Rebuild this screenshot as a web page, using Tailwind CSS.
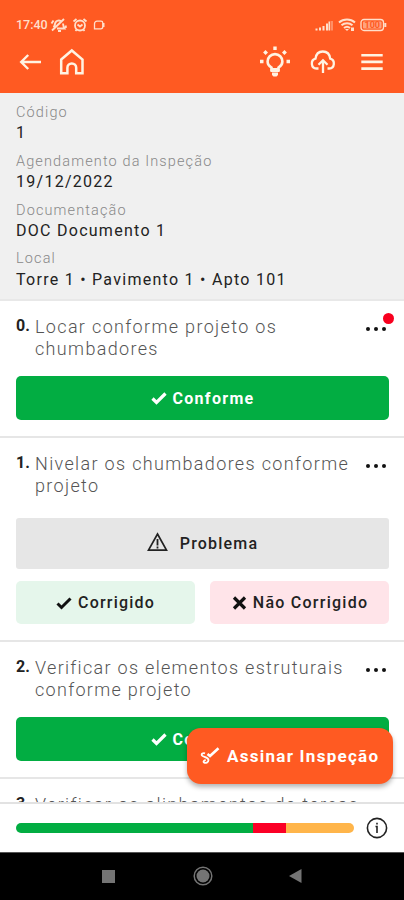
<!DOCTYPE html>
<html lang="pt-BR">

<head>
    <meta charset="UTF-8">
    <meta name="viewport" content="width=device-width, initial-scale=1.0">
    <script src="https://cdn.jsdelivr.net/npm/@tailwindcss/browser@4"></script>
    <title>Inspeção</title>
</head>

<body class="bg-white font-['Roboto',sans-serif] text-[#222]">
    <div class="relative flex flex-col w-[404px] h-[900px] overflow-hidden">
        <!-- Status bar + toolbar -->
        <header class="shrink-0 h-[93px] bg-[#ff5a22] text-[#ffdfcb]">
            <div class="flex items-center justify-between h-8 pt-[17px] pl-4 pr-[17px]">
                <div class="flex items-center">
                    <span class="text-[12.5px] leading-4 font-medium w-[34px]">17:40</span>
                    <svg class="w-[17px] h-4" viewBox="0 0 17 16" fill="none" stroke="currentColor" stroke-width="1.900">
                        <path d="M3.500 10.500C5 9 4.500 7.500 5.500 5.500 6.500 3.500 9 3 11 4M13 6.500c.2 2 .5 3.500 1.500 5H7M8 14h3M2 13.500 14 2M1.500 6.500l2-3M15.800 8.500v2.500" />
                    </svg>
                    <svg class="ml-[5px] w-4 h-4" viewBox="0 0 16 16" fill="none" stroke="currentColor" stroke-width="1.800">
                        <circle cx="8" cy="8.500" r="5" />
                        <path d="M1.500 4.500 4.500 2M14.500 4.500l-3-2.500M5.500 7.500 8 9.500l2.500-2M3.500 14l1.200-1.500M12.500 14l-1.200-1.500" />
                    </svg>
                    <svg class="ml-1 w-[14px] h-4" viewBox="0 0 14 16" fill="none" stroke="currentColor" stroke-width="1.300">
                        <path d="M9 4.200H5a2.500 2.500 0 0 0-2.500 2.500V11.800h6.300a2 2 0 0 0 2-2V6a1.800 1.800 0 0 0-1.800-1.800Z" />
                        <path fill="currentColor" stroke="none" d="M10.500 6h2v4h-2z" />
                    </svg>
                </div>
                <div class="flex items-center">
                    <svg class="w-[19px] h-4" viewBox="0 0 19 16" fill="currentColor">
                        <path d="M.5 11.500h2V13.500h-2zM4 10.500h2v3H4zM7.500 9h2v4.500h-2zM11 6.500h2v7h-2z" />
                        <path d="M13.500 4.500h1.500v9h-1.500z" />
                        <path opacity=".4" d="M15.500 4h2.500v9.500h-2.500z" />
                    </svg>
                    <svg class="ml-1 w-[18px] h-4" viewBox="0 0 18 16" fill="none" stroke="currentColor" stroke-width="2">
                        <path d="M1 5.500c4.500-4 11.500-4 16 0M3.500 8.300c3.200-2.900 7.800-2.900 11 0M6 11c2-1.700 4-1.700 6 0" />
                        <path fill="currentColor" stroke="none" d="m9 14-2-2h4zM13 10.500h3V14h-3z" />
                    </svg>
                    <svg class="ml-1 w-[27px] h-4" viewBox="0 0 27 16" fill="none" stroke="currentColor" stroke-width="1.300">
                        <rect x="1" y="2.500" width="22.500" height="11" rx="3" />
                        <rect x="3" y="4.500" width="18.500" height="7" rx="1" fill="currentColor" fill-opacity=".55" stroke="none" />
                        <path stroke-width="2" d="M25.300 6v4" />
                        <text x="12.300" y="11.200" text-anchor="middle" font-size="9" font-weight="700" fill="#ff5a22" stroke="none">100</text>
                    </svg>
                </div>
            </div>
            <div class="flex items-center h-[60px] pl-[19px] pr-5 text-[#fff3e2]">
                <svg class="w-6 h-6" viewBox="0 0 24 24" fill="none" stroke="currentColor" stroke-width="2.400">
                    <path d="M22 12H2.500M9.200 5l-7 7 7 7" />
                </svg>
                <svg class="ml-4 w-[26px] h-[28px]" viewBox="0 0 26 28" fill="none" stroke="currentColor" stroke-width="2.500">
                    <path d="M2.200 11.500 12.800 2.500l10.700 9V25.300h-6.300v-5.500a4.400 4.400 0 0 0-8.800 0v5.500H2.200z" />
                </svg>
                <svg class="ml-auto w-8 h-8" viewBox="0 0 32 32" fill="none" stroke="currentColor" stroke-width="2.600">
                    <path d="M12.500 24v-2.500c-2.500-1.500-3.900-3.200-3.900-6a7.400 7.400 0 0 1 14.800 0c0 2.800-1.400 4.500-3.900 6V24z" />
                    <path fill="currentColor" stroke="none" d="M11.500 22h9v4h-9zM13 26.500h6v2.500l-1.500 1.500h-3L13 29z" />
                    <path stroke-width="3.400" d="M16 .5v3.500M1 15.500h3.500M27.500 15.500H31M5.300 5.300l2.500 2.500M26.700 5.300l-2.500 2.500" />
                </svg>
                <svg class="ml-[19px] w-[26px] h-6" viewBox="0 0 26 24" fill="none" stroke="currentColor" stroke-width="2.300">
                    <path d="M8.500 18.500H6.500a5 5 0 0 1-1-9.800C6 4.500 8.500 1.500 12.800 1.500S19.700 4.500 20.200 8.700a5 5 0 0 1-1 9.800H17.500" />
                    <path d="M13 23V10.500M8.500 14.800 13 10.300l4.500 4.500" />
                </svg>
                <svg class="ml-6 w-[24px] h-5" viewBox="0 0 24 20" stroke="currentColor" stroke-width="2.600">
                    <path d="M1.300 3.200h21.400M1.300 9.900h21.400M1.300 16.600h21.400" />
                </svg>
            </div>
        </header>

        <!-- Dados da inspeção -->
        <section class="shrink-0 h-[208px] px-4 pt-[10px] bg-[#f0f0f0] border-b-2 border-[#e8e8e8]">
            <div class="h-[48.8px]">
                <p class="text-[14.5px] leading-5 tracking-[1.13px] font-light text-[#888]">Código</p>
                <p class="text-base leading-5 tracking-[1.27px]">1</p>
            </div>
            <div class="h-[48.8px]">
                <p class="text-[14.5px] leading-5 tracking-[1.13px] font-light text-[#888]">Agendamento da Inspeção</p>
                <p class="text-base leading-5 tracking-[1.27px]">19/12/2022</p>
            </div>
            <div class="h-[48.8px]">
                <p class="text-[14.5px] leading-5 tracking-[1.13px] font-light text-[#888]">Documentação</p>
                <p class="text-base leading-5 tracking-[1.27px]">DOC Documento 1</p>
            </div>
            <div class="h-[48.8px]">
                <p class="text-[14.5px] leading-5 tracking-[1.13px] font-light text-[#888]">Local</p>
                <p class="text-base leading-[21px] tracking-[1.27px]">Torre 1 • Pavimento 1 • Apto 101</p>
            </div>
        </section>

        <!-- Itens -->
        <main class="flex-1 min-h-0 overflow-hidden">
            <article class="pt-[15px] pb-4 pl-4 pr-[15px] border-b-2 border-[#e6e6e6]">
                <div class="flex items-start">
                    <span class="w-[19px] shrink-0 text-base leading-5 font-bold">0.</span>
                    <h2 class="flex-1 text-lg leading-[22px] tracking-[1.34px] font-light text-[#555]">Locar conforme projeto os<br>chumbadores</h2>
                    <div class="relative mt-[11px] mr-[3px] flex gap-1">
                        <i class="size-1 rounded-full bg-[#111]"></i>
                        <i class="size-1 rounded-full bg-[#111]"></i>
                        <i class="size-1 rounded-full bg-[#111]"></i>
                        <i class="absolute left-[17px] -top-[14px] size-[11px] rounded-full bg-[#f8001f]"></i>
                    </div>
                </div>
                <button class="mt-4 flex items-center justify-center w-full h-11 rounded-[5px] bg-[#02ad42] text-white">
                    <svg class="w-4 h-4 mr-[6px]" viewBox="0 0 16 16" fill="none" stroke="currentColor" stroke-width="3.200">
                        <path d="m1.500 8.500 4 4L14.500 3.500" />
                    </svg>
                    <span class="pt-px text-base font-bold tracking-[1.3px]">Conforme</span>
                </button>
            </article>

            <article class="pt-[15px] pb-4 pl-4 pr-[15px] border-b-2 border-[#e6e6e6]">
                <div class="flex items-start">
                    <span class="w-[19px] shrink-0 text-base leading-5 font-bold">1.</span>
                    <h2 class="flex-1 text-lg leading-[22px] tracking-[1.34px] font-light text-[#555] whitespace-nowrap">Nivelar os chumbadores conforme<br>projeto</h2>
                    <div class="mt-[11px] mr-[3px] flex gap-1">
                        <i class="size-1 rounded-full bg-[#111]"></i>
                        <i class="size-1 rounded-full bg-[#111]"></i>
                        <i class="size-1 rounded-full bg-[#111]"></i>
                    </div>
                </div>
                <button class="mt-[21px] flex items-center justify-center w-full h-[51px] rounded-[3px] bg-[#e6e6e6]">
                    <svg class="w-[21px] h-5 mr-3 -mt-1" viewBox="0 0 21 20" fill="none" stroke="#222" stroke-width="1.700">
                        <path d="M10.500 2 19.500 18.200h-18z" />
                        <path stroke-width="1.800" d="M10.500 7v6.500M10.500 14.500v2" />
                    </svg>
                    <span class="text-base font-medium tracking-[1.2px]">Problema</span>
                </button>
                <div class="mt-3 grid grid-cols-2 gap-[15px]">
                    <button class="flex items-center justify-center h-[43px] rounded-[5px] bg-[#e5f6eb]">
                        <svg class="w-4 h-4 mr-[6px]" viewBox="0 0 16 16" fill="none" stroke="#111" stroke-width="3">
                            <path d="m1.500 8.500 4 4L14.500 3.500" />
                        </svg>
                        <span class="text-base font-medium tracking-[1.2px]">Corrigido</span>
                    </button>
                    <button class="flex items-center justify-center h-[43px] rounded-[5px] bg-[#ffe4e9]">
                        <svg class="w-[15px] h-4 ml-px mr-[6px]" viewBox="0 0 15 16" fill="none" stroke="#111" stroke-width="3.200">
                            <path d="m2 2.500 11 11M13 2.500l-11 11" />
                        </svg>
                        <span class="text-base font-medium tracking-[1.25px]">Não Corrigido</span>
                    </button>
                </div>
            </article>

            <article class="pt-[15px] pb-4 pl-4 pr-[15px] border-b-2 border-[#e6e6e6]">
                <div class="flex items-start">
                    <span class="w-[19px] shrink-0 text-base leading-5 font-bold">2.</span>
                    <h2 class="flex-1 text-lg leading-[22px] tracking-[1.3px] font-light text-[#555] whitespace-nowrap">Verificar os elementos estruturais<br>conforme projeto</h2>
                    <div class="mt-[11px] mr-[3px] flex gap-1">
                        <i class="size-1 rounded-full bg-[#111]"></i>
                        <i class="size-1 rounded-full bg-[#111]"></i>
                        <i class="size-1 rounded-full bg-[#111]"></i>
                    </div>
                </div>
                <button class="mt-4 flex items-center justify-center w-full h-11 rounded-[5px] bg-[#02ad42] text-white">
                    <svg class="w-4 h-4 mr-[6px]" viewBox="0 0 16 16" fill="none" stroke="currentColor" stroke-width="3.200">
                        <path d="m1.500 8.500 4 4L14.500 3.500" />
                    </svg>
                    <span class="pt-px text-base font-bold tracking-[1.3px]">Conforme</span>
                </button>
            </article>

            <article class="pt-[15px] pl-4 pr-[15px]">
                <div class="flex items-start">
                    <span class="w-[19px] shrink-0 text-base leading-5 font-bold">3.</span>
                    <h2 class="flex-1 text-lg leading-[22px] tracking-[1.34px] font-light text-[#555] whitespace-nowrap">Verificar os alinhamentos de terças</h2>
                </div>
            </article>
        </main>

        <!-- Progresso -->
        <footer class="shrink-0 flex items-center h-[50px] pl-4 pr-4 border-t-2 border-[#e2e2e2] bg-white">
            <div class="flex w-[338px] h-[10px] -mt-px rounded-full overflow-hidden">
                <div class="bg-[#02ad42]" style="width: 70%"></div>
                <div class="bg-[#fb0026]" style="width: 10%"></div>
                <div class="bg-[#ffb54a]" style="width: 20%"></div>
            </div>
            <svg class="ml-auto w-[22px] h-[22px] -mt-px" viewBox="0 0 22 22" fill="none" stroke="#222" stroke-width="1.600">
                <circle cx="11" cy="11" r="9.600" />
                <path d="M9.500 9.500H11V16M11 5.800v1.800" />
            </svg>
        </footer>

        <!-- Navegação do sistema -->
        <nav class="shrink-0 h-12 bg-black border-t border-[#555] flex items-center pl-[102px]">
            <div class="size-[13px] -mt-px bg-[#747474]"></div>
            <svg class="ml-[78px] -mt-px w-5 h-5" viewBox="0 0 20 20" fill="none" stroke="#747474">
                <circle cx="10" cy="10" r="8.800" stroke-width="1.500" />
                <circle cx="10" cy="10" r="6.500" fill="#747474" stroke="none" />
            </svg>
            <svg class="ml-[76px] -mt-px w-[13px] h-[14px]" viewBox="0 0 13 14" fill="#747474">
                <path d="M0 7 12.500 0v14z" />
            </svg>
        </nav>

        <!-- Botão flutuante -->
        <button class="absolute left-[187px] top-[728px] flex items-center w-[206px] h-[56px] pl-[13px] rounded-[14px] bg-[#ff5a22] text-white shadow-[0_3px_5px_rgba(0,0,0,0.3)]">
            <svg class="w-5 h-[18px] mr-[7px]" viewBox="0 0 20 18" fill="none" stroke="currentColor" stroke-width="1.800">
                <path d="M5 6.300C3 5.500 1 6.800 2 8.500c1 1.500 6.500 1.500 6.500 4.500 0 2.500-3 3.500-4.500 2.500-1-.8 0-2.200 1.800-2.300" />
                <path stroke-width="2.600" d="m7.500 7 2.500 2L18.500 1.200" />
            </svg>
            <span class="pt-px text-[17px] font-bold tracking-[1.27px] whitespace-nowrap">Assinar Inspeção</span>
        </button>
    </div>
</body>

</html>
